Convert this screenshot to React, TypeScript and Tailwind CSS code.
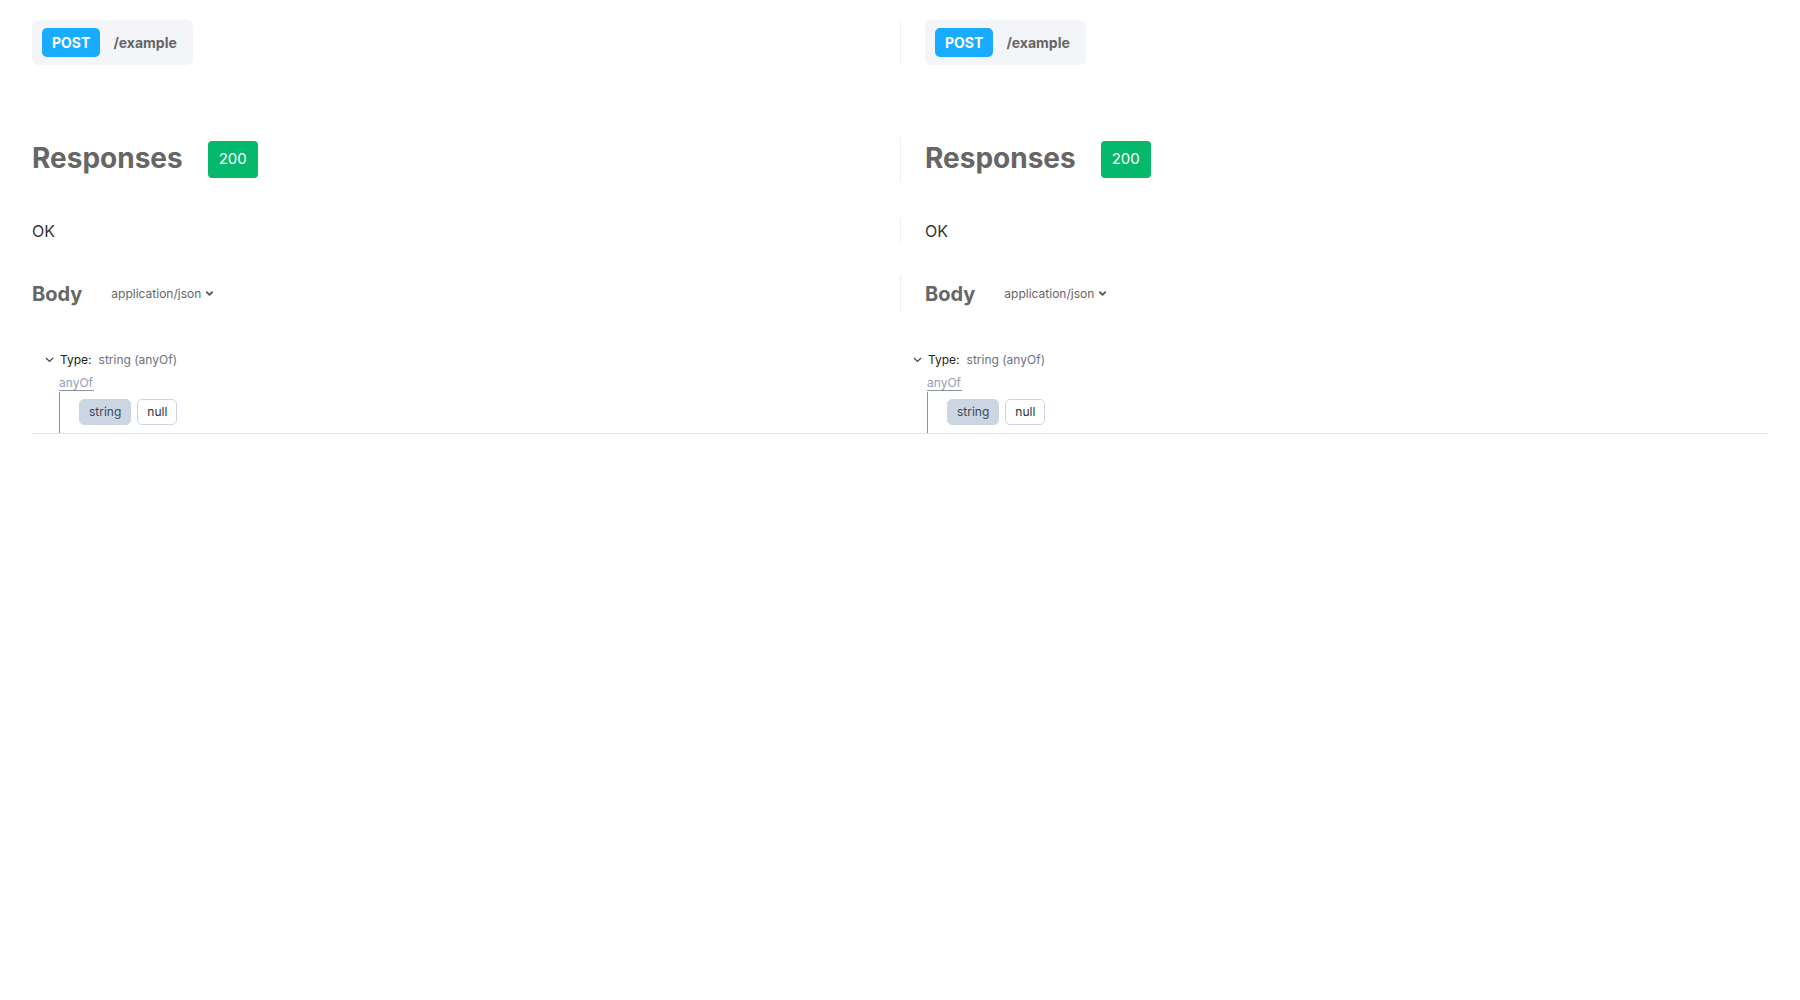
import { ChevronDown } from 'lucide-react'

function PathBar() {
  return (
    <div className="inline-flex items-center h-[45px] rounded-md bg-[#f4f5f8] pl-[10px] pr-[16px]">
      <span className="h-[29px] px-[10px] rounded-[5px] bg-[#19abff] text-white text-[14px] font-bold flex items-center">
        POST
      </span>
      <span className="ml-[13px] text-[14px] font-bold text-[#666666]">/example</span>
    </div>
  )
}

function ResponsesHeader() {
  return (
    <div className="flex items-center h-[45px]">
      <h2 className="text-[28px] font-bold text-[#666666] leading-none -mt-[4px]">Responses</h2>
      <span className="ml-[25px] h-[37px] w-[50px] rounded-[4px] bg-[#05b86c] text-white text-[15px] font-normal flex items-center justify-center">
        200
      </span>
    </div>
  )
}

function BodyHeader() {
  return (
    <div className="flex items-center h-[37px]">
      <span className="text-[20px] font-bold text-[#666666]">Body</span>
      <span className="ml-[29px] text-[12px] text-[#666666] flex items-center gap-[3px]">
        application/json
        <ChevronDown size={11} strokeWidth={4} className="text-[#555]" />
      </span>
    </div>
  )
}

function TypeTree() {
  return (
    <div className="pl-[13px] pt-[1px] text-[12px]">
      <div className="flex items-center h-[17px]">
        <svg width="9" height="6" viewBox="0 0 9 6" className="mr-[6px]">
          <path d="M1 1l3.5 3.5L8 1" fill="none" stroke="#444" strokeWidth="1.2" />
        </svg>
        <span className="text-[#222]">Type:</span>
        <span className="ml-[7px] text-[#6b7280]">string (anyOf)</span>
      </div>
      <div className="ml-[14px] mt-[6px]">
        <div className="inline-block text-[12px] leading-[15px] text-[#94a0b8] border-b border-[#8a94a6] pr-[1px]">
          anyOf
        </div>
        <div className="border-l border-[#8a94a6] pl-[19px] pt-[7px] pb-[8px] flex gap-[6px]">
          <span className="h-[26px] px-[9px] rounded-[5px] bg-[#ccd6e2] border border-[#ccd6e2] text-[#3c4657] text-[12px] flex items-center">
            string
          </span>
          <span className="h-[26px] px-[9px] rounded-[5px] bg-white border border-[#ccd6e2] text-[#2a2f38] text-[12px] flex items-center">
            null
          </span>
        </div>
      </div>
    </div>
  )
}

function Panel({ side, children }: { side: 'left' | 'right'; children: React.ReactNode }) {
  return side === 'right' ? (
    <div className="border-l border-[#f0f0f0] pl-6">{children}</div>
  ) : (
    <div className="pr-6">{children}</div>
  )
}

export default function App() {
  const sides: ('left' | 'right')[] = ['left', 'right']
  return (
    <div className="min-h-screen bg-white px-8 pt-5" style={{ fontFamily: 'Inter, "Noto Sans", sans-serif' }}>
      <div className="border-b border-[#e5e5e5]">
        <div className="grid grid-cols-2">
          {sides.map(s => (
            <Panel key={s} side={s}><PathBar /></Panel>
          ))}
        </div>

        <div className="grid grid-cols-2 mt-[72px]">
          {sides.map(s => (
            <Panel key={s} side={s}><ResponsesHeader /></Panel>
          ))}
        </div>

        <div className="grid grid-cols-2 mt-[36px]">
          {sides.map(s => (
            <Panel key={s} side={s}>
              <div className="h-[25px] flex items-center text-[16px] text-[#333333]">OK</div>
            </Panel>
          ))}
        </div>

        <div className="grid grid-cols-2 mt-[32px]">
          {sides.map(s => (
            <Panel key={s} side={s}><BodyHeader /></Panel>
          ))}
        </div>

        <div className="grid grid-cols-2 mt-[38px]">
          {sides.map(s => (
            <div key={s}><TypeTree /></div>
          ))}
        </div>
      </div>
    </div>
  )
}
